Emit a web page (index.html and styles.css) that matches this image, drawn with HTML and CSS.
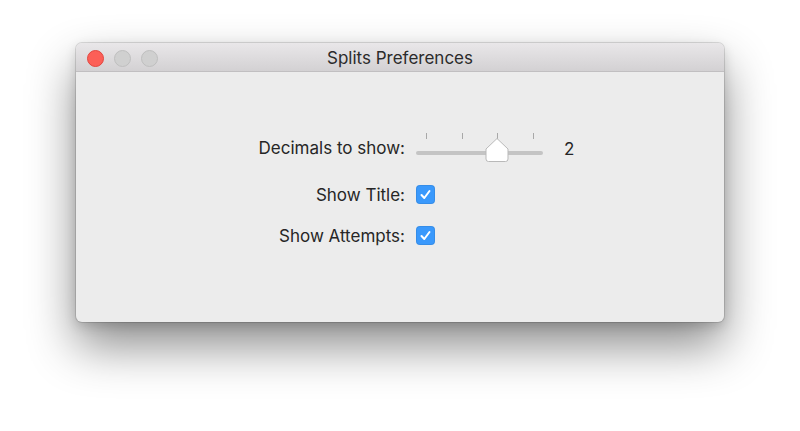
FILE: index.html
```html
<!DOCTYPE html>
<html>
<head>
<meta charset="utf-8">
<link rel="stylesheet" href="styles.css">
</head>
<body>
<div class="window">
  <div class="titlebar">
    <div class="lights">
      <span class="light close"></span>
      <span class="light"></span>
      <span class="light"></span>
    </div>
    <div class="title">Splits Preferences</div>
  </div>
  <div class="content">
    <div class="form">
      <div class="label">Decimals to show:</div>
      <div class="control slider-row">
        <svg class="slider" width="128" height="30" viewBox="0 0 128 30">
          <g stroke="#a8a8a8" stroke-width="1">
            <line x1="10.5" y1="0" x2="10.5" y2="6"/>
            <line x1="46.5" y1="0" x2="46.5" y2="6"/>
            <line x1="81.5" y1="0" x2="81.5" y2="6"/>
            <line x1="117.5" y1="0" x2="117.5" y2="6"/>
          </g>
          <rect x="0" y="18" width="127" height="4" rx="2" fill="#c4c4c4"/>
          <path d="M81 5.5 L92 16 L92 26 Q92 28.5 89.5 28.5 L72.5 28.5 Q70 28.5 70 26 L70 16 Z" fill="#ffffff" stroke="#b9b9b9" stroke-width="1"/>
        </svg>
        <span class="value">2</span>
      </div>
      <div class="label">Show Title:</div>
      <div class="control"><span class="check"><svg width="19" height="19" viewBox="0 0 19 19"><path d="M5.5 10 L8.3 13 L13.5 6" fill="none" stroke="#fff" stroke-width="2" stroke-linecap="round" stroke-linejoin="round"/></svg></span></div>
      <div class="label">Show Attempts:</div>
      <div class="control"><span class="check"><svg width="19" height="19" viewBox="0 0 19 19"><path d="M5.5 10 L8.3 13 L13.5 6" fill="none" stroke="#fff" stroke-width="2" stroke-linecap="round" stroke-linejoin="round"/></svg></span></div>
    </div>
  </div>
</div>
</body>
</html>
```
FILE: styles.css
```css
html, body {
  margin: 0;
  padding: 0;
  background: #ffffff;
  width: 800px;
  height: 431px;
  overflow: hidden;
}
body {
  padding: 43px 0 0 76px;
  box-sizing: border-box;
  font-family: Inter, Roboto, sans-serif;
  color: #262626;
}
.window {
  width: 648px;
  height: 279px;
  border-radius: 6px;
  background: #ececec;
  display: flex;
  flex-direction: column;
  overflow: hidden;
  box-shadow: 0 0 0 1px rgba(0,0,0,0.12), 0 24px 48px rgba(0,0,0,0.45), 0 4px 12px rgba(0,0,0,0.15);
}
.titlebar {
  height: 28px;
  flex: none;
  background: linear-gradient(#e9e7e9, #d3d1d3);
  border-bottom: 1px solid #c1bfc1;
  display: flex;
  align-items: center;
  position: relative;
}
.lights {
  display: flex;
  gap: 10px;
  padding-left: 11px;
  padding-top: 2px;
}
.light {
  width: 15px;
  height: 15px;
  border-radius: 50%;
  background: #d0d0d0;
  border: 1px solid #bfbfbf;
}
.light.close {
  background: #fc5f57;
  border-color: #e2463f;
}
.title {
  position: absolute;
  left: 0;
  right: 0;
  top: 5px;
  text-align: center;
  font-size: 17px;
  color: #2b2b2b;
}
.content {
  flex: 1;
  padding-top: 61px;
}
.form {
  display: grid;
  grid-template-columns: 329px auto;
  grid-template-rows: 30px 19px 19px;
  column-gap: 11px;
  row-gap: 22px;
  align-items: center;
}
.label {
  text-align: right;
  font-size: 17px;
  color: #262626;
}
.control {
  display: flex;
  align-items: center;
}
.slider {
  display: block;
}
.value {
  margin-left: 20px;
  font-size: 17px;
  margin-top: 1px;
}
.check {
  width: 19px;
  height: 19px;
  border-radius: 4px;
  background: #3a99fc;
  display: block;
  box-shadow: inset 0 0 0 1px rgba(0,0,0,0.08);
}
.check svg {
  display: block;
}
```
